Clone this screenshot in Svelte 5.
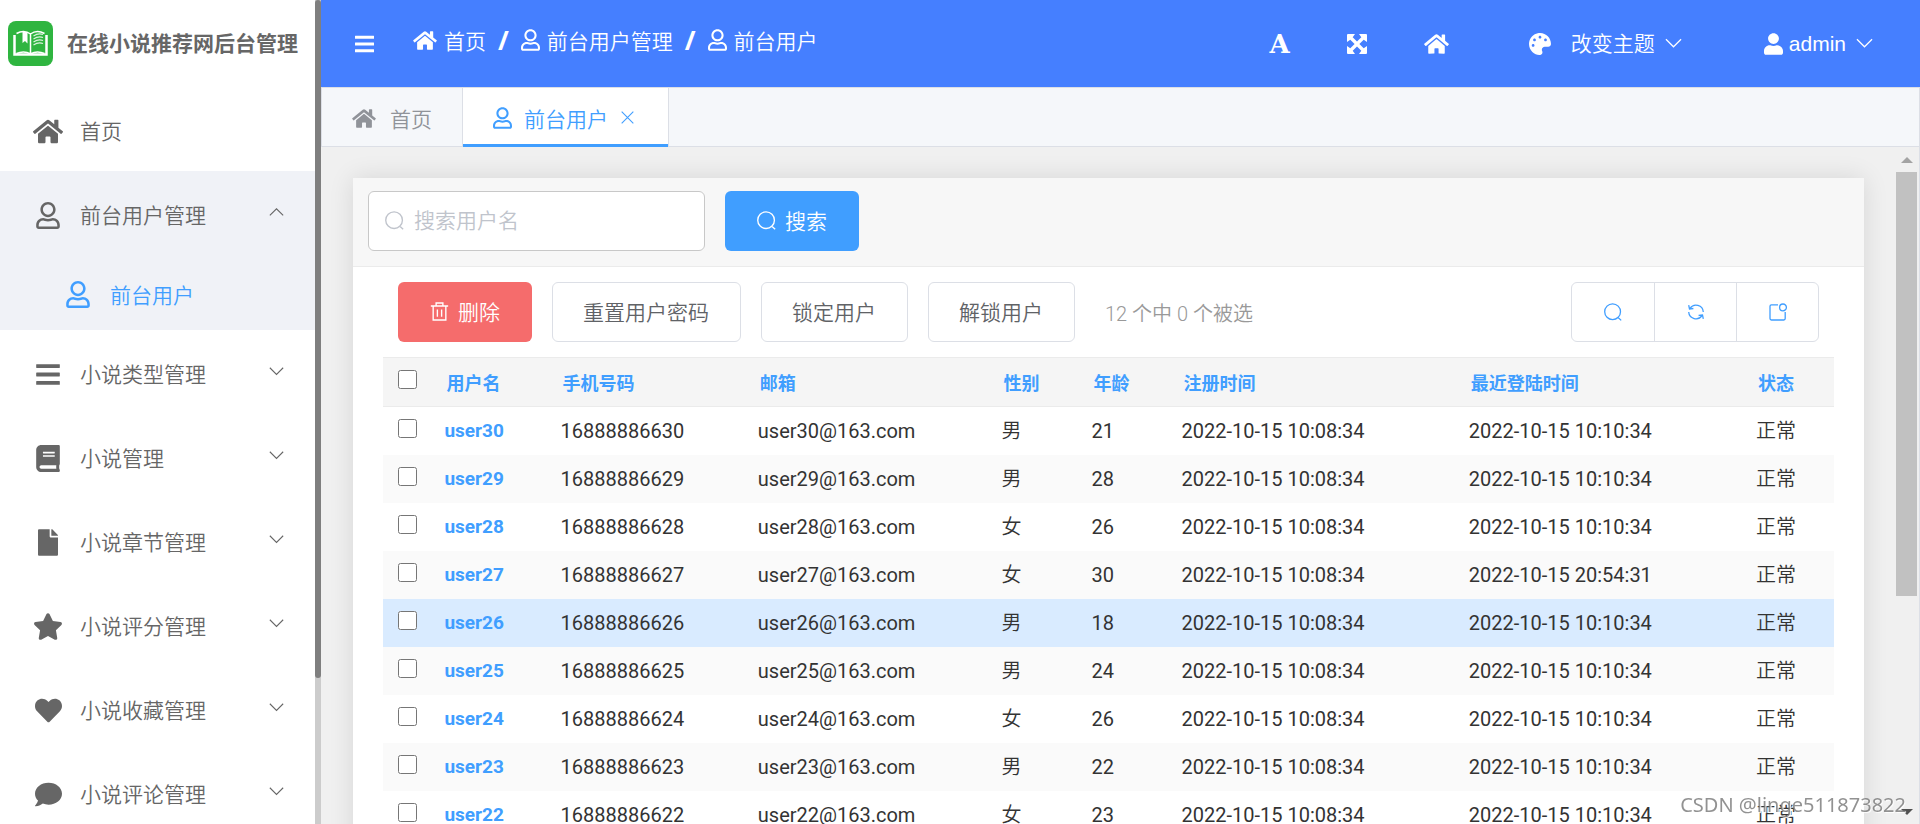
<script lang="ts">
	interface Icon {
		w: number;
		h: number;
		d: string;
	}

	interface User {
		name: string;
		phone: string;
		sex: string;
		age: number;
		createdAt: string;
		lastLogin: string;
		checked: boolean;
	}

	const icons: Record<string, Icon> = {
		home: {
			w: 576,
			h: 512,
			d: "M280.37 148.26L96 300.11V464a16 16 0 0 0 16 16l112.06-.29a16 16 0 0 0 15.92-16V368a16 16 0 0 1 16-16h64a16 16 0 0 1 16 16v95.64a16 16 0 0 0 16 16.05L464 480a16 16 0 0 0 16-16V300L295.67 148.26a12.19 12.19 0 0 0-15.3 0zM571.6 251.47L488 182.56V44.05a12 12 0 0 0-12-12h-56a12 12 0 0 0-12 12v72.61L318.47 43a48 48 0 0 0-61 0L4.34 251.47a12 12 0 0 0-1.6 16.9l25.5 31A12 12 0 0 0 45.15 301l235.22-193.74a12.19 12.19 0 0 1 15.3 0L530.9 301a12 12 0 0 0 16.9-1.6l25.5-31a12 12 0 0 0-1.7-16.93z",
		},
		userLine: {
			w: 448,
			h: 512,
			d: "M313.6 304c-28.7 0-42.5 16-89.6 16-47.1 0-60.8-16-89.6-16C60.2 304 0 364.2 0 438.4V464c0 26.5 21.5 48 48 48h352c26.5 0 48-21.5 48-48v-25.6c0-74.2-60.2-134.4-134.4-134.4zM400 464H48v-25.6c0-47.6 38.8-86.4 86.4-86.4 14.6 0 38.3 16 89.6 16 51.7 0 74.9-16 89.6-16 47.6 0 86.4 38.8 86.4 86.4V464zM224 288c79.5 0 144-64.5 144-144S303.5 0 224 0 80 64.5 80 144s64.5 144 144 144zm0-240c52.9 0 96 43.1 96 96s-43.1 96-96 96-96-43.1-96-96 43.1-96 96-96z",
		},
		user: {
			w: 448,
			h: 512,
			d: "M224 256c70.7 0 128-57.3 128-128S294.7 0 224 0 96 57.3 96 128s57.3 128 128 128zm89.6 32h-16.7c-22.2 10.2-46.9 16-72.9 16s-50.6-5.8-72.9-16h-16.7C60.2 288 0 348.2 0 422.4V464c0 26.5 21.5 48 48 48h352c26.5 0 48-21.5 48-48v-41.6c0-74.2-60.2-134.4-134.4-134.4z",
		},
		bars: {
			w: 448,
			h: 512,
			d: "M8 60h432a8 8 0 0 1 8 8v56a8 8 0 0 1-8 8H8a8 8 0 0 1-8-8V68a8 8 0 0 1 8-8zM8 220h432a8 8 0 0 1 8 8v56a8 8 0 0 1-8 8H8a8 8 0 0 1-8-8v-56a8 8 0 0 1 8-8zM8 380h432a8 8 0 0 1 8 8v56a8 8 0 0 1-8 8H8a8 8 0 0 1-8-8v-56a8 8 0 0 1 8-8z",
		},
		book: {
			w: 448,
			h: 512,
			d: "M448 360V24c0-13.3-10.7-24-24-24H96C43 0 0 43 0 96v320c0 53 43 96 96 96h328c13.3 0 24-10.7 24-24v-16c0-7.5-3.5-14.3-8.9-18.7-4.2-15.4-4.2-59.3 0-74.7 5.4-4.3 8.9-11.1 8.9-18.6zM128 134c0-3.3 2.7-6 6-6h212c3.3 0 6 2.7 6 6v20c0 3.3-2.7 6-6 6H134c-3.3 0-6-2.7-6-6v-20zm0 64c0-3.3 2.7-6 6-6h212c3.3 0 6 2.7 6 6v20c0 3.3-2.7 6-6 6H134c-3.3 0-6-2.7-6-6v-20zm253.4 250H96c-17.7 0-32-14.3-32-32 0-17.6 14.4-32 32-32h285.4c-1.9 17.1-1.9 46.9 0 64z",
		},
		file: {
			w: 384,
			h: 512,
			d: "M224 136V0H24C10.7 0 0 10.7 0 24v464c0 13.3 10.7 24 24 24h336c13.3 0 24-10.7 24-24V160H248c-13.2 0-24-10.8-24-24zm160-14.1v6.1H256V0h6.1c6.4 0 12.5 2.5 17 7l97.9 98c4.5 4.5 7 10.6 7 16.9z",
		},
		star: {
			w: 576,
			h: 512,
			d: "M259.3 17.8L194 150.2 47.9 171.5c-26.2 3.8-36.7 36.1-17.7 54.6l105.7 103-25 145.5c-4.5 26.3 23.2 46 46.4 33.7L288 439.6l130.7 68.7c23.2 12.2 50.9-7.4 46.4-33.7l-25-145.5 105.7-103c19-18.5 8.5-50.8-17.7-54.6L382 150.2 316.7 17.8c-11.7-23.6-45.6-23.9-57.4 0z",
		},
		heart: {
			w: 512,
			h: 512,
			d: "M462.3 62.6C407.5 15.9 326 24.3 275.7 76.2L256 96.5l-19.7-20.3C186.1 24.3 104.5 15.9 49.7 62.6c-62.8 53.6-66.1 149.8-9.9 207.9l193.5 199.8c12.5 12.9 32.8 12.9 45.3 0l193.5-199.8c56.3-58.1 53-154.3-9.8-207.9z",
		},
		comment: {
			w: 512,
			h: 512,
			d: "M256 32C114.6 32 0 125.1 0 240c0 49.6 21.4 95 57 130.7C44.5 421.1 2.7 466 2.2 466.5c-2.2 2.3-2.8 5.7-1.5 8.7S4.8 480 8 480c66.3 0 116-31.8 140.6-51.4 32.7 12.3 69 19.4 107.4 19.4 141.4 0 256-93.1 256-208S397.4 32 256 32z",
		},
		palette: {
			w: 512,
			h: 512,
			d: "M204.3 5C104.9 24.4 24.8 104.3 5.2 203.4c-37 187 131.7 326.4 258.8 306.7 41.2-6.4 61.4-54.6 42.5-91.7-23.1-45.4 9.9-98.4 60.9-98.4h79.7c35.8 0 64.8-29.6 64.9-65.3C511.5 97.1 368.1-26.9 204.3 5zM96 320c-17.7 0-32-14.3-32-32s14.3-32 32-32 32 14.3 32 32-14.3 32-32 32zm32-128c-17.7 0-32-14.3-32-32s14.3-32 32-32 32 14.3 32 32-14.3 32-32 32zm128-64c-17.7 0-32-14.3-32-32s14.3-32 32-32 32 14.3 32 32-14.3 32-32 32zm128 64c-17.7 0-32-14.3-32-32s14.3-32 32-32 32 14.3 32 32-14.3 32-32 32z",
		},
		expand: {
			w: 20,
			h: 20,
			d: "M1 0h7L5.7 3.3 10 7.6l4.3-4.3L12 0h7a1 1 0 0 1 1 1v7l-3.3-2.3L12.4 10l4.3 4.3L20 12v7a1 1 0 0 1-1 1h-7l2.3-3.3L10 12.4l-4.3 4.3L8 20H1a1 1 0 0 1-1-1v-7l3.3 2.3L7.6 10 3.3 5.7 0 8V1a1 1 0 0 1 1-1z",
		},
	};

	// thin outline icons, all on an 18 x 18 grid
	const lines: Record<string, string> = {
		search: "M8.600.8a7.900 7.900 0 1 1 0 15.800A7.900 7.900 0 0 1 8.600.8zM13.800 14.200l3.400 3.200",
		trash: "M.8 3.8h16.4M5.8 3.8V1h6.4v2.8M3 3.8V17h12V3.8M7 7v7M11 7v7",
		refresh:
			"M3 5.400A7.300 7.300 0 0 1 16.300 9M1.700 2.200l.8 3.900 3.900-.6M15 12.600A7.300 7.300 0 0 1 1.700 9M16.300 15.800l-.8-3.900-3.900.6",
		columns:
			"M9 1.8H2.4A1.4 1.4 0 0 0 1 3.2v12.4A1.4 1.4 0 0 0 2.4 17h12.4a1.4 1.4 0 0 0 1.4-1.4V9M14 1a3.4 3.4 0 1 1 0 6.8A3.4 3.4 0 0 1 14 1z",
		down: "M1 4.5l8 8 8-8",
		up: "M1 12.5l8-8 8 8",
		close: "M2 2l14 14M16 2L2 16",
	};

	const menu = [
		{ title: "小说类型管理", icon: "bars" },
		{ title: "小说管理", icon: "book" },
		{ title: "小说章节管理", icon: "file" },
		{ title: "小说评分管理", icon: "star" },
		{ title: "小说收藏管理", icon: "heart" },
		{ title: "小说评论管理", icon: "comment" },
	];

	const columns = [
		"用户名",
		"手机号码",
		"邮箱",
		"性别",
		"年龄",
		"注册时间",
		"最近登陆时间",
		"状态",
	];

	const row = (
		n: number,
		sex: string,
		age: number,
		lastLogin = "2022-10-15 10:10:34",
	): User => ({
		name: `user${n}`,
		phone: `168888866${n}`,
		sex,
		age,
		createdAt: "2022-10-15 10:08:34",
		lastLogin,
		checked: false,
	});

	let users = $state<User[]>([
		row(30, "男", 21),
		row(29, "男", 28),
		row(28, "女", 26),
		row(27, "女", 30, "2022-10-15 20:54:31"),
		row(26, "男", 18),
		row(25, "男", 24),
		row(24, "女", 26),
		row(23, "男", 22),
		row(22, "女", 23),
	]);

	const TOTAL = 12;
	let keyword = $state("");
	let hovered = $state("user26");
	let selected = $derived(users.filter((u) => u.checked).length);

	const toggleAll = (e: Event) => {
		const target = e.target as HTMLInputElement;
		users.forEach((u) => (u.checked = target.checked));
	};
</script>

{#snippet icon(name: string, size: number)}
	<svg
		class="icon"
		height={size}
		width={Math.round((size * icons[name].w) / icons[name].h)}
		viewBox="0 0 {icons[name].w} {icons[name].h}"
		aria-hidden="true"
	>
		<path d={icons[name].d} fill="currentColor" />
	</svg>
{/snippet}

{#snippet line(name: string, size: number)}
	<svg
		class="icon"
		width={size}
		height={size}
		viewBox="0 0 18 18"
		fill="none"
		stroke="currentColor"
		stroke-width="1.3"
		aria-hidden="true"
	>
		<path d={lines[name]} />
	</svg>
{/snippet}

<div class="app">
	<aside>
		<div class="side-body">
			<div class="brand">
				<svg width="45" height="45" viewBox="0 0 45 45" aria-hidden="true">
					<rect width="45" height="45" rx="8" fill="#2fb540" />
					<path
						d="M6.500 14v19.500h32V14"
						fill="none"
						stroke="#fff"
						stroke-width="2.500"
					/>
					<path
						d="M8.500 12.500c4.500-2.500 10-2.500 14 .5v20c-4-2.500-9.500-2.500-14-.5M36.500 12.500c-4.500-2.500-10-2.500-14 .5M22.500 33c4-2.500 9.500-2.500 14-.5"
						fill="none"
						stroke="#fff"
						stroke-width="1.5"
					/>
					<path d="M14.500 11h5v11.500l-2.500-2.500-2.500 2z" fill="#fff" />
					<path
						d="M25.500 15c3-2 6.500-2.500 9.500-1.500M25.500 18c3-2 6.500-2.500 9.500-1.500M25.500 21c3-2 6.500-2.500 9.500-1.500M25.500 24c3-2 6.500-2.500 9.500-1.500"
						fill="none"
						stroke="#d9f3dc"
						stroke-width="1.2"
					/>
				</svg>
				<h1>在线小说推荐网后台管理</h1>
			</div>
			<nav>
				<button class="item">
					<span class="slot">{@render icon("home", 27)}</span>
					<span class="label">首页</span>
				</button>
				<div class="group">
					<button class="item">
						<span class="slot">{@render icon("userLine", 27)}</span>
						<span class="label">前台用户管理</span>
						{@render line("up", 15)}
					</button>
					<a class="item sub" href="#users">
						<span class="slot">{@render icon("userLine", 27)}</span>
						<span class="label">前台用户</span>
					</a>
				</div>
				{#each menu as m}
					<button class="item">
						<span class="slot">{@render icon(m.icon, 27)}</span>
						<span class="label">{m.title}</span>
						{@render line("down", 15)}
					</button>
				{/each}
			</nav>
		</div>
		<div class="side-track"><div class="side-thumb"></div></div>
	</aside>

	<main>
		<header>
			<button class="plain" aria-label="折叠菜单">
				{@render icon("bars", 22)}
			</button>
			<nav class="crumbs">
				<a href="#home">{@render icon("home", 21)}首页</a>
				<b>/</b>
				<a href="#manage">{@render icon("userLine", 22)}前台用户管理</a>
				<b>/</b>
				<a href="#users">{@render icon("userLine", 22)}前台用户</a>
			</nav>
			<div class="tools">
				<button class="plain letter">A</button>
				<button class="plain" aria-label="全屏">
					{@render icon("expand", 20)}
				</button>
				<button class="plain" aria-label="首页">
					{@render icon("home", 22)}
				</button>
			</div>
			<button class="plain theme">
				{@render icon("palette", 22)}
				<span>改变主题</span>
				{@render line("down", 17)}
			</button>
			<button class="plain account">
				{@render icon("user", 22)}
				<span>admin</span>
				{@render line("down", 17)}
			</button>
		</header>

		<div class="tabs">
			<button class="tab">{@render icon("home", 21)}首页</button>
			<button class="tab active">
				{@render icon("userLine", 22)}前台用户{@render line("close", 15)}
			</button>
		</div>

		<div class="content">
			<section class="card">
				<form class="search" onsubmit={(e) => e.preventDefault()}>
					<label class="field">
						{@render line("search", 19)}
						<input
							type="text"
							placeholder="搜索用户名"
							aria-label="搜索用户名"
							bind:value={keyword}
						/>
					</label>
					<button class="btn primary" type="submit">
						{@render line("search", 19)}搜索
					</button>
				</form>

				<div class="body">
					<div class="toolbar">
						<button class="btn danger">
							{@render line("trash", 19)}删除
						</button>
						<button class="btn">重置用户密码</button>
						<button class="btn">锁定用户</button>
						<button class="btn">解锁用户</button>
						<span class="count">{TOTAL} 个中 {selected} 个被选</span>
						<div class="actions">
							<button aria-label="搜索">{@render line("search", 18)}</button>
							<button aria-label="刷新">{@render line("refresh", 18)}</button>
							<button aria-label="列">{@render line("columns", 18)}</button>
						</div>
					</div>

					<table>
						<colgroup>
							<col class="c-check" />
							<col class="c-name" />
							<col class="c-phone" />
							<col class="c-mail" />
							<col class="c-sex" />
							<col class="c-age" />
							<col class="c-time" />
							<col class="c-time" />
							<col />
						</colgroup>
						<thead>
							<tr>
								<th>
									<input
										type="checkbox"
										aria-label="全选"
										onchange={toggleAll}
									/>
								</th>
								{#each columns as c}
									<th class="text">{c}</th>
								{/each}
							</tr>
						</thead>
						<tbody>
							{#each users as user}
								<tr
									class:hover={user.name === hovered}
									onmouseenter={() => (hovered = user.name)}
								>
									<td>
										<input
											type="checkbox"
											aria-label={user.name}
											bind:checked={user.checked}
										/>
									</td>
									<td><a href="#{user.name}">{user.name}</a></td>
									<td>{user.phone}</td>
									<td>{user.name}@163.com</td>
									<td class="han">{user.sex}</td>
									<td>{user.age}</td>
									<td>{user.createdAt}</td>
									<td>{user.lastLogin}</td>
									<td class="han">正常</td>
								</tr>
							{/each}
						</tbody>
					</table>
				</div>
			</section>

			<div class="track">
				<div class="arrow"></div>
				<div class="thumb"></div>
				<div class="arrow end"></div>
			</div>
		</div>
	</main>

	<div class="watermark">CSDN @linge511873822</div>
</div>

<style>
	:global(body) {
		overflow: hidden;
	}

	.app {
		display: flex;
		height: 100vh;
		overflow: hidden;
		font-family: "Liberation Sans", "Noto Sans CJK SC", sans-serif;
		font-size: 21px;
		font-weight: 350;
		color: #666;
	}

	.app * {
		box-sizing: border-box;
	}

	button,
	input {
		font: inherit;
		color: inherit;
	}

	button {
		cursor: pointer;
	}

	a {
		color: inherit;
		text-decoration: none;
	}

	.icon {
		display: block;
		flex: none;
	}

	aside {
		display: flex;
		flex: none;
		width: 321px;
		background: #fff;
	}

	.side-body {
		flex: 1;
		overflow: hidden;
	}

	.side-track {
		width: 6px;
		background: #ccc;
	}

	.side-thumb {
		height: 82.3%;
		border-radius: 3px;
		background: #7f7f7f;
	}

	.brand {
		display: flex;
		align-items: center;
		gap: 14px;
		height: 87px;
		padding-left: 8px;
	}

	h1 {
		margin: 0;
		padding-bottom: 3px;
		font-size: 21px;
		font-weight: 700;
		white-space: nowrap;
	}

	.item {
		display: flex;
		align-items: center;
		width: 100%;
		height: 84px;
		padding: 4px 31px 0;
		border: 0;
		background: none;
		text-align: left;
	}

	.item .slot {
		display: flex;
		justify-content: center;
		width: 34px;
	}

	.item .label {
		flex: 1;
		padding: 0 0 2px 15px;
	}

	.item > :global(svg) {
		margin-bottom: 6px;
	}

	.group {
		background: #f0f2f7;
	}

	.item.sub {
		height: 75px;
		padding-left: 61px;
		color: #409eff;
	}

	main {
		display: flex;
		flex: 1;
		flex-direction: column;
		min-width: 0;
		background: #f0f0f0;
	}

	header {
		display: flex;
		flex: none;
		align-items: center;
		height: 87px;
		padding: 0 47px 0 34px;
		background: #457fff;
		color: #fff;
	}

	.plain {
		display: flex;
		align-items: center;
		padding: 0;
		border: 0;
		background: none;
	}

	.crumbs {
		display: flex;
		flex: 1;
		align-items: center;
		gap: 12px;
		padding: 0 0 7px 39px;
	}

	.crumbs a {
		display: flex;
		align-items: center;
		gap: 7px;
	}

	.crumbs b {
		font-family: "Noto Sans", sans-serif;
		font-size: 26px;
		line-height: 30px;
	}

	.tools {
		display: flex;
		align-items: center;
		gap: 57px;
	}

	.letter {
		font-family: "DejaVu Serif", serif;
		font-size: 26px;
		font-weight: 700;
		line-height: 30px;
	}

	.theme {
		gap: 10px;
		margin-left: 80px;
	}

	.theme span {
		padding: 0 0 3px 10px;
	}

	.account {
		gap: 6px;
		margin-left: 82px;
	}

	.account span {
		padding-right: 4px;
	}

	.tabs {
		display: flex;
		flex: none;
		height: 60px;
		border: 1px solid #dcdfe6;
		background: #f5f7fa;
	}

	.tab {
		display: flex;
		align-items: center;
		gap: 14px;
		padding: 2px 30px 0;
		border: 0;
		background: none;
		color: #909399;
	}

	.tab.active {
		gap: 12px;
		margin-bottom: -1px;
		padding: 0 33px 0 30px;
		border: solid #dcdfe6;
		border-width: 0 1px;
		background: #fff;
		box-shadow: inset 0 -3px #409eff;
		color: #409eff;
	}

	.content {
		display: flex;
		flex: 1;
		min-height: 0;
		padding-left: 32px;
		border-right: 1px solid #dcdfe6;
		overflow: hidden;
	}

	.card {
		flex: 1;
		align-self: flex-start;
		margin: 31px 32px 0 0;
		background: #fff;
		box-shadow: 0 0 24px rgba(0, 0, 0, 0.11);
	}

	.search {
		display: flex;
		gap: 20px;
		padding: 13px 15px 15px;
		border-bottom: 1px solid #ebebeb;
		background: #f7f7f7;
	}

	.field {
		display: flex;
		align-items: center;
		gap: 10px;
		width: 337px;
		height: 60px;
		padding: 0 16px 2px;
		border: 1px solid #c8c8c8;
		border-radius: 6px;
		background: #fff;
		color: #c0c4cc;
	}

	.field input {
		flex: 1;
		min-width: 0;
		padding: 2px 0 0;
		border: 0;
		outline: 0;
		background: none;
		color: #606266;
	}

	.field input::placeholder {
		color: #c0c4cc;
	}

	.btn {
		display: flex;
		align-items: center;
		gap: 9px;
		height: 60px;
		padding: 0 31px 2px 30px;
		border: 1px solid #dcdfe6;
		border-radius: 6px;
		background: #fff;
		color: #606266;
	}

	.btn.primary {
		padding: 0 32px 2px;
		border: 0;
		background: #409eff;
		color: #fff;
	}

	.btn.danger {
		padding: 0 32px 2px;
		border: 0;
		background: #f56c6c;
		color: #fff;
	}

	.body {
		padding: 15px 30px 30px;
	}

	.toolbar {
		display: flex;
		align-items: center;
		gap: 20px;
		padding: 0 15px 15px;
	}

	.count {
		padding-left: 10px;
		font-family: Roboto, "Noto Sans CJK SC", sans-serif;
		font-size: 20px;
		color: #999;
	}

	.actions {
		display: flex;
		margin-left: auto;
		border: 1px solid #dcdfe6;
		border-radius: 6px;
	}

	.actions button {
		display: flex;
		align-items: center;
		justify-content: center;
		width: 82px;
		height: 58px;
		padding: 0;
		border: 0;
		background: none;
		color: #409eff;
	}

	.actions button + button {
		border-left: 1px solid #dcdfe6;
	}

	table {
		width: 100%;
		border-collapse: collapse;
		table-layout: fixed;
		font-family: Roboto, "Noto Sans CJK SC", sans-serif;
		font-size: 20px;
		font-weight: 400;
		color: #333;
	}

	.c-check {
		width: 3.2%;
	}

	.c-name {
		width: 8%;
	}

	.c-phone {
		width: 13.6%;
	}

	.c-mail {
		width: 16.8%;
	}

	.c-sex {
		width: 6.2%;
	}

	.c-age {
		width: 6.2%;
	}

	.c-time {
		width: 19.8%;
	}

	thead tr {
		height: 49px;
		border: solid #ebebeb;
		border-width: 1px 0;
		background: #f5f5f5;
	}

	th {
		padding: 0 15px;
		font-size: 18px;
		font-weight: 700;
		text-align: left;
		white-space: nowrap;
		color: #409eff;
	}

	th.text {
		padding: 0 0 0 17px;
	}

	tbody tr {
		height: 48px;
	}

	tbody tr:nth-child(even) {
		background: #fafafa;
	}

	tbody tr.hover {
		background: #d9ebff;
	}

	td {
		padding: 0 0 0 15px;
		line-height: 24px;
		white-space: nowrap;
	}

	td.han {
		font-weight: 350;
	}

	td a {
		font-size: 19px;
		font-weight: 700;
		color: #409eff;
	}

	input[type="checkbox"] {
		display: block;
		width: 19px;
		height: 19px;
		margin: 0 0 5px;
	}

	.track {
		display: flex;
		flex-direction: column;
		width: 21px;
		margin-right: 2px;
		background: #f0f0f0;
	}

	.arrow {
		flex: none;
		width: 0;
		height: 0;
		margin: 10px auto 9px;
		border: solid transparent;
		border-width: 0 6px 6px;
		border-bottom-color: #a3a3a3;
	}

	.arrow.end {
		margin-top: auto;
		border-width: 6px 6px 0;
		border-top-color: #505050;
	}

	.thumb {
		height: 62.6%;
		background: #c1c1c1;
	}

	.watermark {
		position: fixed;
		right: 14px;
		bottom: 6px;
		font-family: "Noto Sans", sans-serif;
		font-size: 20px;
		font-weight: 400;
		line-height: 26px;
		color: rgba(110, 110, 110, 0.75);
		text-shadow: 1px 1px 1px #fff;
		pointer-events: none;
	}
</style>
